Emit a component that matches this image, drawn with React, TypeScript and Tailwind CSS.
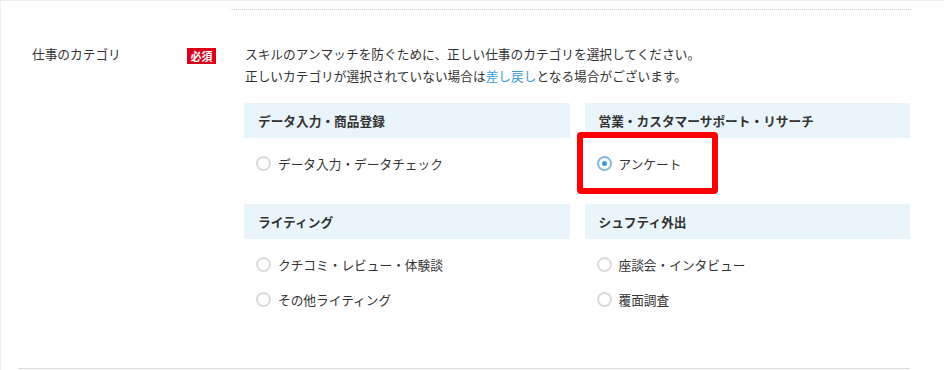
import type { ReactNode } from "react";

type Option = { label: string; checked?: boolean; highlight?: boolean };
type Group = { title: string; options: Option[] };

const groups: Group[] = [
  { title: "データ入力・商品登録", options: [{ label: "データ入力・データチェック" }] },
  {
    title: "営業・カスタマーサポート・リサーチ",
    options: [{ label: "アンケート", checked: true, highlight: true }],
  },
  {
    title: "ライティング",
    options: [{ label: "クチコミ・レビュー・体験談" }, { label: "その他ライティング" }],
  },
  {
    title: "シュフティ外出",
    options: [{ label: "座談会・インタビュー" }, { label: "覆面調査" }],
  },
];

function Radio({ checked }: { checked?: boolean }): JSX.Element {
  if (checked) {
    return (
      <span className="flex h-[15px] w-[15px] shrink-0 items-center justify-center rounded-full border-2 border-[#86b6d8] bg-white">
        <span className="h-[5px] w-[5px] rounded-full bg-[#3d9bd6]" />
      </span>
    );
  }
  return <span className="h-[15px] w-[15px] shrink-0 rounded-full border-2 border-[#dadada] bg-white" />;
}

function OptionRow({ option }: { option: Option }): JSX.Element {
  return (
    <label className="relative flex h-[35px] items-center gap-[7px] pl-[12px]">
      <Radio checked={option.checked} />
      <span>{option.label}</span>
      {option.highlight && (
        <span
          aria-hidden
          className="pointer-events-none absolute left-[-8px] top-[-14px] z-10 h-[62px] w-[141px] rounded-[4px] border-[6px] border-[#ff0000]"
        />
      )}
    </label>
  );
}

function CategoryGroup({ group }: { group: Group }): ReactNode {
  return (
    <div>
      <div className="flex h-[35px] items-center bg-[#eaf5fb] pl-[14px] font-bold">{group.title}</div>
      <div className="pt-[8px]">
        {group.options.map((o) => (
          <OptionRow key={o.label} option={o} />
        ))}
      </div>
    </div>
  );
}

export default function App(): JSX.Element {
  return (
    <div className="h-[370px] w-[944px] overflow-hidden border-l border-t border-[#eeeeee] bg-white font-['Noto_Sans_CJK_JP','Noto_Sans',sans-serif] text-[12.7px] leading-[22px] text-[#333]">
      <div className="ml-[229px] mt-[8px] w-[681px] border-t border-dotted border-[#cfcfcf]" />

      <div className="ml-[17px] flex w-[892px] border-b border-[#dddddd] pb-[51px] pt-[33px]">
        <div className="flex w-[226px] shrink-0 items-start pl-[14px]">
          <span className="w-[155px]">仕事のカテゴリ</span>
          <span className="mt-[5px] flex h-[16px] w-[29px] items-center justify-center bg-[#d9001b] text-[11px] font-bold leading-none text-white">
            必須
          </span>
        </div>

        <div className="w-[666px]">
          <p className="pl-px">
            スキルのアンマッチを防ぐために、正しい仕事のカテゴリを選択してください。
            <br />
            正しいカテゴリが選択されていない場合は
            <a className="text-[#3c9bd5]">差し戻し</a>
            となる場合がございます。
          </p>

          <div className="mt-[16px] grid grid-cols-2 gap-x-[15px] gap-y-[23px]">
            {groups.map((g) => (
              <CategoryGroup key={g.title} group={g} />
            ))}
          </div>
        </div>
      </div>
    </div>
  );
}
